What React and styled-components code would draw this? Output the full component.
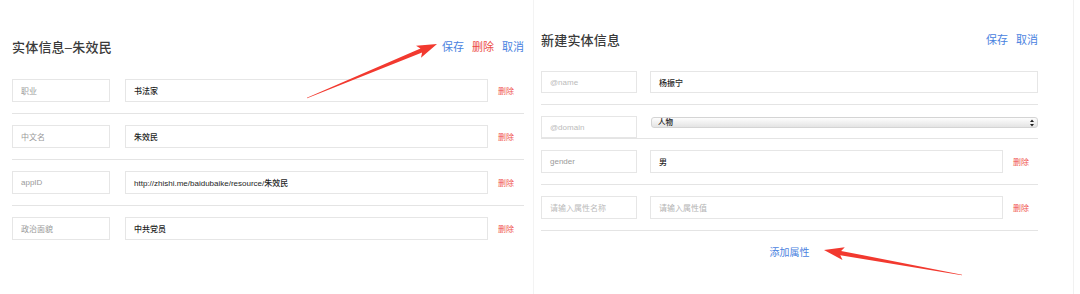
import React from "react";
import styled, { createGlobalStyle } from "styled-components";

const GlobalStyle = createGlobalStyle`
  body {
    margin: 0;
    background: #fff;
    font-family: "Liberation Sans", "Noto Sans CJK SC", sans-serif;
  }
`;

const Page = styled.div`
  position: relative;
  display: flex;
  width: 1080px;
  height: 294px;
  background: #fff;
  overflow: hidden;
`;

const Panel = styled.section`
  display: flex;
  flex-direction: column;
  box-sizing: border-box;
  width: ${(p) => p.width}px;
  margin-left: ${(p) => p.offset || 0}px;
  padding: ${(p) => p.pad};
  border-left: ${(p) => (p.framed ? "1px solid #f3f3f3" : "none")};
  border-right: ${(p) => (p.framed ? "1px solid #f1f1f1" : "none")};
`;

const Header = styled.div`
  display: flex;
  align-items: center;
  justify-content: space-between;
  height: 30px;
  margin-top: ${(p) => p.top}px;
  margin-bottom: ${(p) => p.bottom}px;
  padding-right: ${(p) => p.right || 0}px;
`;

const Title = styled.h2`
  margin: 0;
  font-size: 13px;
  font-weight: 500;
  color: #3a3a3a;
  letter-spacing: 0.2px;
`;

const Actions = styled.div`
  display: flex;
  gap: 8px;
`;

const Action = styled.a`
  font-size: 11px;
  color: ${(p) => (p.danger ? "#ec4b43" : "#4a82e0")};
  cursor: pointer;
`;

const Row = styled.div`
  display: flex;
  align-items: ${(p) => (p.top ? "flex-start" : "center")};
  padding: 11px 0 ${(p) => (p.flush ? 0 : 11)}px;
  border-bottom: ${(p) => (p.last ? "none" : "1px solid #e4e4e4")};
`;

const Box = styled.div`
  display: flex;
  align-items: center;
  box-sizing: border-box;
  height: ${(p) => p.h}px;
  padding-left: 8px;
  border: 1px solid #e6e6e6;
  font-size: 8px;
  white-space: nowrap;
  overflow: hidden;
`;

const LabelBox = styled(Box)`
  flex: 0 0 ${(p) => p.w}px;
  color: ${(p) => (p.placeholder ? "#bbb" : "#9a9a9a")};
`;

const ValueBox = styled(Box)`
  flex: 1;
  margin-left: ${(p) => p.gap}px;
  color: ${(p) => (p.placeholder ? "#b4b4b4" : "#1e1e1e")};
  font-weight: ${(p) => (p.placeholder ? 400 : 500)};
`;

const Delete = styled.a`
  flex: 0 0 auto;
  margin: 0 ${(p) => p.side}px 0 10px;
  font-size: 8px;
  color: #f0554d;
  cursor: pointer;
`;

const SelectWrap = styled.div`
  position: relative;
  flex: 1;
  margin-left: 14px;
  margin-top: 1px;
`;

const Select = styled.select`
  appearance: none;
  display: block;
  width: 100%;
  height: 11px;
  padding: 0 0 0 6px;
  border: 1px solid #d4d4d4;
  border-radius: 3px;
  background: linear-gradient(#fdfdfd, #e4e4e4);
  font-family: inherit;
  font-size: 7.5px;
  font-weight: 500;
  line-height: 9px;
  color: #222;
`;

const Caret = styled.svg`
  position: absolute;
  right: 4px;
  top: 2px;
  pointer-events: none;
`;

const AddRow = styled.div`
  display: flex;
  justify-content: center;
  padding-top: 13px;
`;

const AddLink = styled.a`
  font-size: 10px;
  color: #4a82e0;
  cursor: pointer;
`;

const Overlay = styled.svg`
  position: absolute;
  left: 0;
  top: 0;
  pointer-events: none;
`;

const leftRows = [
  { label: "职业", value: "书法家" },
  { label: "中文名", value: "朱效民" },
  { label: "appID", value: "http://zhishi.me/baidubaike/resource/朱效民" },
  { label: "政治面貌", value: "中共党员" },
];

// tapered annotation arrow, like the ones drawn by screenshot tools
function arrowPoints(x1, y1, x2, y2) {
  const dx = x2 - x1;
  const dy = y2 - y1;
  const len = Math.hypot(dx, dy);
  const ux = dx / len;
  const uy = dy / len;
  const nx = -uy;
  const ny = ux;
  const head = 17;
  const wing = 6.5;
  const neck = 2.2;
  const bx = x2 - ux * head;
  const by = y2 - uy * head;
  const wx = x2 - ux * (head + 3);
  const wy = y2 - uy * (head + 3);
  const pts = [
    [x1 + nx * 0.3, y1 + ny * 0.3],
    [bx + nx * neck, by + ny * neck],
    [wx + nx * wing, wy + ny * wing],
    [x2, y2],
    [wx - nx * wing, wy - ny * wing],
    [bx - nx * neck, by - ny * neck],
    [x1 - nx * 0.3, y1 - ny * 0.3],
  ];
  return pts.map((p) => p.map((v) => v.toFixed(1)).join(",")).join(" ");
}

const App = () => {
  return (
    <Page>
      <GlobalStyle />

      <Panel width={524} pad="0 0 0 12px">
        <Header top={31} bottom={7}>
          <Title>实体信息–朱效民</Title>
          <Actions>
            <Action>保存</Action>
            <Action danger>删除</Action>
            <Action>取消</Action>
          </Actions>
        </Header>
        {leftRows.map((r, i) => (
          <Row key={r.label} last={i === leftRows.length - 1}>
            <LabelBox w={98} h={23}>{r.label}</LabelBox>
            <ValueBox gap={15} h={23}>{r.value}</ValueBox>
            <Delete side={10}>删除</Delete>
          </Row>
        ))}
      </Panel>

      <Panel width={541} offset={9} pad="0 35px 0 7px" framed>
        <Header top={24} bottom={6}>
          <Title>新建实体信息</Title>
          <Actions>
            <Action>保存</Action>
            <Action>取消</Action>
          </Actions>
        </Header>
        <Row>
          <LabelBox w={96} h={22} placeholder>@name</LabelBox>
          <ValueBox gap={13} h={22}>杨振宁</ValueBox>
        </Row>
        <Row top flush>
          <LabelBox w={96} h={22} placeholder>@domain</LabelBox>
          <SelectWrap>
            <Select defaultValue="人物">
              <option>人物</option>
              <option>地点</option>
              <option>机构</option>
            </Select>
            <Caret width="4" height="8" viewBox="0 0 4 8">
              <path d="M0 3 L2 0.5 L4 3 Z M0 5 L2 7.5 L4 5 Z" fill="#222" />
            </Caret>
          </SelectWrap>
        </Row>
        <Row>
          <LabelBox w={96} h={23}>gender</LabelBox>
          <ValueBox gap={13} h={23}>男</ValueBox>
          <Delete side={9}>删除</Delete>
        </Row>
        <Row>
          <LabelBox w={96} h={23} placeholder>请输入属性名称</LabelBox>
          <ValueBox gap={13} h={23} placeholder>请输入属性值</ValueBox>
          <Delete side={9}>删除</Delete>
        </Row>
        <AddRow>
          <AddLink>添加属性</AddLink>
        </AddRow>
      </Panel>

      <Overlay width="1080" height="294" viewBox="0 0 1080 294">
        <polygon points={arrowPoints(307, 98, 437, 44)} fill="#f2392f" />
        <polygon points={arrowPoints(962, 275, 824, 250)} fill="#f2392f" />
      </Overlay>
    </Page>
  );
};

export default App;
